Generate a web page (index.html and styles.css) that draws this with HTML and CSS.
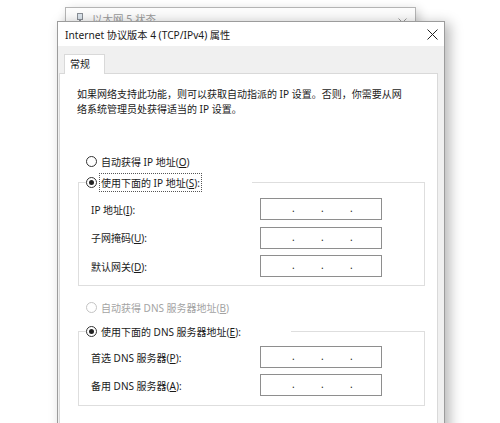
FILE: index.html
```html
<!DOCTYPE html>
<html lang="zh-CN">
<head>
    <meta charset="UTF-8">
    <meta name="viewport" content="width=device-width, initial-scale=1.0">
    <title>Internet 协议版本 4 (TCP/IPv4) 属性</title>
    <link rel="stylesheet" href="styles.css">
</head>
<body>
    <div class="desktop">
        <div class="back-window">
            <div class="back-title">
                <svg class="back-icon" width="8" height="10" viewBox="0 0 8 10">
                    <rect x="1.5" y="0.5" width="5" height="6" fill="#dde6ee" stroke="#8a8f96"/>
                    <rect x="3" y="6.5" width="2" height="2" fill="#8a8f96"/>
                    <rect x="0.5" y="8.5" width="7" height="1" fill="#8a8f96"/>
                </svg>
                <span>以太网 5 状态</span>
                <svg class="back-close" width="9" height="9" viewBox="0 0 9 9">
                    <path d="M0.5 0.5 L8.5 8.5 M8.5 0.5 L0.5 8.5" stroke="#9a9a9a" stroke-width="1"/>
                </svg>
            </div>
        </div>

        <div class="dialog">
            <div class="titlebar">
                <span class="title">Internet 协议版本 4 (TCP/IPv4) 属性</span>
                <svg class="close" width="11" height="11" viewBox="0 0 11 11">
                    <path d="M0.5 0.5 L10.5 10.5 M10.5 0.5 L0.5 10.5" stroke="#222" stroke-width="1"/>
                </svg>
            </div>
            <div class="dialog-body">
                <div class="tabs">
                    <div class="tab">常规</div>
                </div>
                <div class="panel">
                    <p class="intro">如果网络支持此功能，则可以获取自动指派的 IP 设置。否则，你需要从网<br>络系统管理员处获得适当的 IP 设置。</p>

                    <div class="radio-row radio-ip-auto">
                        <span class="radio"></span>
                        <span>自动获得 IP 地址(<u>O</u>)</span>
                    </div>
                    <fieldset class="group group-ip">
                        <legend class="legend-ip">
                            <span class="radio checked"></span>
                            <span class="focus">使用下面的 IP 地址(<u>S</u>):</span>
                        </legend>
                        <div class="field-row">
                            <label>IP 地址(<u>I</u>):</label>
                            <div class="ip-box"><span>.</span><span>.</span><span>.</span></div>
                        </div>
                        <div class="field-row">
                            <label>子网掩码(<u>U</u>):</label>
                            <div class="ip-box"><span>.</span><span>.</span><span>.</span></div>
                        </div>
                        <div class="field-row">
                            <label>默认网关(<u>D</u>):</label>
                            <div class="ip-box"><span>.</span><span>.</span><span>.</span></div>
                        </div>
                    </fieldset>

                    <div class="radio-row radio-dns-auto disabled">
                        <span class="radio"></span>
                        <span>自动获得 DNS 服务器地址(<u>B</u>)</span>
                    </div>
                    <fieldset class="group group-dns">
                        <legend class="legend-dns">
                            <span class="radio checked"></span>
                            <span>使用下面的 DNS 服务器地址(<u>E</u>):</span>
                        </legend>
                        <div class="field-row">
                            <label>首选 DNS 服务器(<u>P</u>):</label>
                            <div class="ip-box"><span>.</span><span>.</span><span>.</span></div>
                        </div>
                        <div class="field-row">
                            <label>备用 DNS 服务器(<u>A</u>):</label>
                            <div class="ip-box"><span>.</span><span>.</span><span>.</span></div>
                        </div>
                    </fieldset>
                </div>
            </div>
        </div>
    </div>
</body>
</html>
```

FILE: styles.css
```css
body {
    margin: 0;
    background-color: #fff;
    font-family: "Noto Sans", "Noto Sans CJK SC", sans-serif;
    font-size: 10px;
    color: #1a1a1a;
}
.desktop {
    position: relative;
    width: 500px;
    height: 423px;
    overflow: hidden;
}
.back-window {
    position: absolute;
    left: 65px;
    top: 7px;
    width: 349px;
    height: 60px;
    background-color: #fcfcfc;
    border: 1px solid #b4b4b4;
    box-shadow: 3px 3px 10px rgba(0, 0, 0, 0.2);
}
.back-title {
    display: flex;
    align-items: center;
    height: 20px;
    padding-left: 10px;
    color: #9a9a9a;
    font-size: 10.5px;
}
.back-icon {
    margin-right: 8px;
}
.back-close {
    margin-left: auto;
    margin-right: 8px;
    margin-top: 8px;
}
.dialog {
    position: absolute;
    left: 57px;
    top: 21px;
    width: 386px;
    height: 420px;
    background-color: #f0f0f0;
    border: 1px solid #9c9c9c;
    box-shadow: 5px 2px 12px rgba(0, 0, 0, 0.28);
}
.titlebar {
    display: flex;
    align-items: center;
    height: 24px;
    padding-left: 7px;
    background-color: #fff;
}
.title {
    font-size: 10.2px;
}
.close {
    margin-left: auto;
    margin-right: 6px;
}
.dialog-body {
    padding: 8px 6px 0 1px;
}
.tabs {
    display: flex;
    padding-left: 5px;
}
.tab {
    position: relative;
    height: 20px;
    width: 41px;
    margin-bottom: -1px;
    padding-left: 5px;
    box-sizing: border-box;
    line-height: 18px;
    background-color: #fff;
    border: 1px solid #d9d9d9;
    border-bottom: none;
}
.panel {
    height: 360px;
    padding: 13px 11px 0 17px;
    background-color: #fff;
    border: 1px solid #d9d9d9;
}
.intro {
    margin: 0;
    line-height: 15px;
}
.radio-row {
    display: flex;
    align-items: center;
    height: 16px;
    padding-left: 9px;
}
.radio-ip-auto {
    margin-top: 36px;
}
.radio-dns-auto {
    margin-top: 13px;
}
.disabled {
    color: #a3a3a3;
}
.radio {
    width: 9px;
    height: 9px;
    margin-right: 4px;
    border: 1px solid #333;
    border-radius: 50%;
    background-color: #fff;
    display: flex;
    align-items: center;
    justify-content: center;
    flex-shrink: 0;
}
.disabled .radio {
    border-color: #c4c4c4;
}
.radio.checked::after {
    content: "";
    width: 5px;
    height: 5px;
    border-radius: 50%;
    background-color: #222;
}
.group {
    margin: 5px 0 0 1px;
    padding: 0;
    width: 345px;
    border: 1px solid #dedede;
    min-width: 0;
}
.group-dns {
    margin-top: 8px;
    padding-bottom: 9px;
}
.group-ip {
    padding-bottom: 8px;
}
.group legend {
    display: flex;
    align-items: center;
    height: 16px;
    padding: 0;
    margin-left: 7px;
}
.legend-ip {
    width: 166px;
}
.legend-dns {
    width: 205px;
}
.focus {
    padding: 1px 1px;
    border: 1px dotted #555;
    margin-left: -2px;
}
.field-row {
    display: flex;
    align-items: center;
    height: 22px;
    padding-left: 12px;
    margin-top: 6.5px;
}
.group-ip .field-row:first-of-type {
    margin-top: 8px;
}
.group-dns .field-row:first-of-type {
    margin-top: 7px;
}
.group-dns .field-row + .field-row {
    margin-top: 6px;
}
.field-row label {
    width: 169px;
}
.ip-box {
    display: flex;
    width: 122px;
    height: 22px;
    box-sizing: border-box;
    padding-left: 31px;
    border: 1px solid #8e8e8e;
    background-color: #fff;
    line-height: 18px;
}
.ip-box span {
    width: 29px;
}
```
